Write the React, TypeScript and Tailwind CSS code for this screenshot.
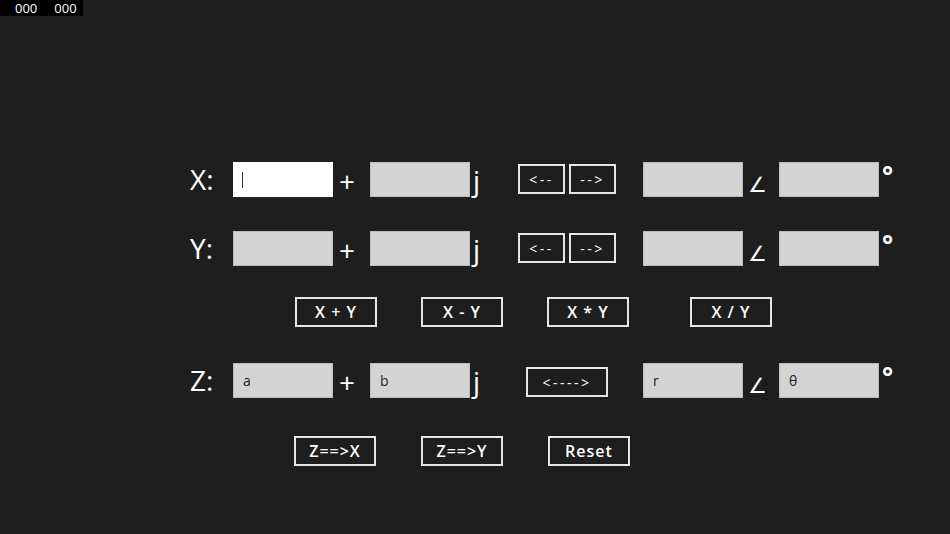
import React from "react";

const font = { fontFamily: '"Open Sans", "Noto Sans", "DejaVu Sans", sans-serif' };

function Box({ white, text, caret }: { white?: boolean; text?: string; caret?: boolean }) {
  return (
    <div
      className={
        "w-[100px] h-[35px] flex items-center border shrink-0 " +
        (white ? "bg-white border-white" : "bg-[#d3d3d3] border-[#bdbdbd]")
      }
    >
      {caret && <div className="ml-[8px] w-[1px] h-[16px] bg-[#333]" />}
      {text && <span className="ml-[9px] text-[14px] text-[#222] leading-none">{text}</span>}
    </div>
  );
}

function Btn({ label, w, small }: { label: string; w: string; small?: boolean }) {
  return (
    <div
      className={
        w +
        " h-[30px] border-2 border-[#e6e6e6] flex items-center justify-center text-white shrink-0 " +
        (small ? "text-[14px] font-medium tracking-[2.5px]" : "text-[16px] font-semibold tracking-[1px]")
      }
    >
      <span className="whitespace-pre">{label}</span>
    </div>
  );
}

function Label({ t }: { t: string }) {
  return <div className="w-[43px] h-[35px] text-[28px] leading-[35px] text-white shrink-0">{t}</div>;
}

function Plus() {
  return <div className="w-[37px] h-[35px] pl-[6px] text-[28px] leading-[38px] text-white shrink-0">+</div>;
}

function J({ w }: { w: string }) {
  return <div className={w + " h-[35px] pl-[3px] text-[28px] leading-[36px] text-white shrink-0"}>j</div>;
}

function Angle() {
  return (
    <div
      className="w-[36px] h-[35px] flex items-end justify-start pl-[5px] pb-[1px] text-[21px] leading-none text-white shrink-0"
      style={{ fontFamily: '"DejaVu Sans", sans-serif' }}
    >
      ∠
    </div>
  );
}

function Deg() {
  return <div className="h-[35px] pl-[3px] text-[26px] font-bold leading-[26px] text-white shrink-0">°</div>;
}

function XYRow({ label, first }: { label: string; first?: boolean }) {
  return (
    <div className="flex items-start h-[35px]">
      <Label t={label} />
      <Box white={first} caret={first} />
      <Plus />
      <Box />
      <J w="w-[48px]" />
      <div className="flex gap-[4px] mt-[2px]">
        <Btn label="<--" w="w-[47px]" small />
        <Btn label="-->" w="w-[47px]" small />
      </div>
      <div className="w-[27px] shrink-0" />
      <Box />
      <Angle />
      <Box />
      <Deg />
    </div>
  );
}

export default function App() {
  return (
    <div className="relative w-[950px] h-[534px] bg-[#1e1e1e] overflow-hidden" style={font}>
      <div className="absolute top-0 left-0 w-[83px] h-[16px] bg-black flex items-center text-white text-[13px] font-medium leading-[16px]">
        <span className="ml-[15px]">000</span>
        <span className="ml-[17px]">000</span>
      </div>
      <div className="pt-[162px] pl-[190px] flex flex-col">
        <XYRow label="X:" first />
        <div className="h-[34px]" />
        <XYRow label="Y:" />
        <div className="flex mt-[31px] ml-[105px] gap-[44px]">
          <Btn label="X + Y" w="w-[82px]" />
          <Btn label="X - Y" w="w-[82px]" />
          <Btn label="X * Y" w="w-[82px]" />
          <div className="ml-[17px]">
            <Btn label="X / Y" w="w-[82px]" />
          </div>
        </div>
        <div className="flex items-start h-[35px] mt-[36px]">
          <Label t="Z:" />
          <Box text="a" />
          <Plus />
          <Box text="b" />
          <J w="w-[56px]" />
          <div className="mt-[4px]">
            <Btn label="<---->" w="w-[82px]" small />
          </div>
          <div className="w-[35px] shrink-0" />
          <Box text="r" />
          <Angle />
          <Box text="θ" />
          <Deg />
        </div>
        <div className="flex mt-[38px] ml-[104px] gap-[45px]">
          <Btn label="Z==>X" w="w-[82px]" />
          <Btn label="Z==>Y" w="w-[82px]" />
          <Btn label="Reset" w="w-[82px]" />
        </div>
      </div>
    </div>
  );
}
